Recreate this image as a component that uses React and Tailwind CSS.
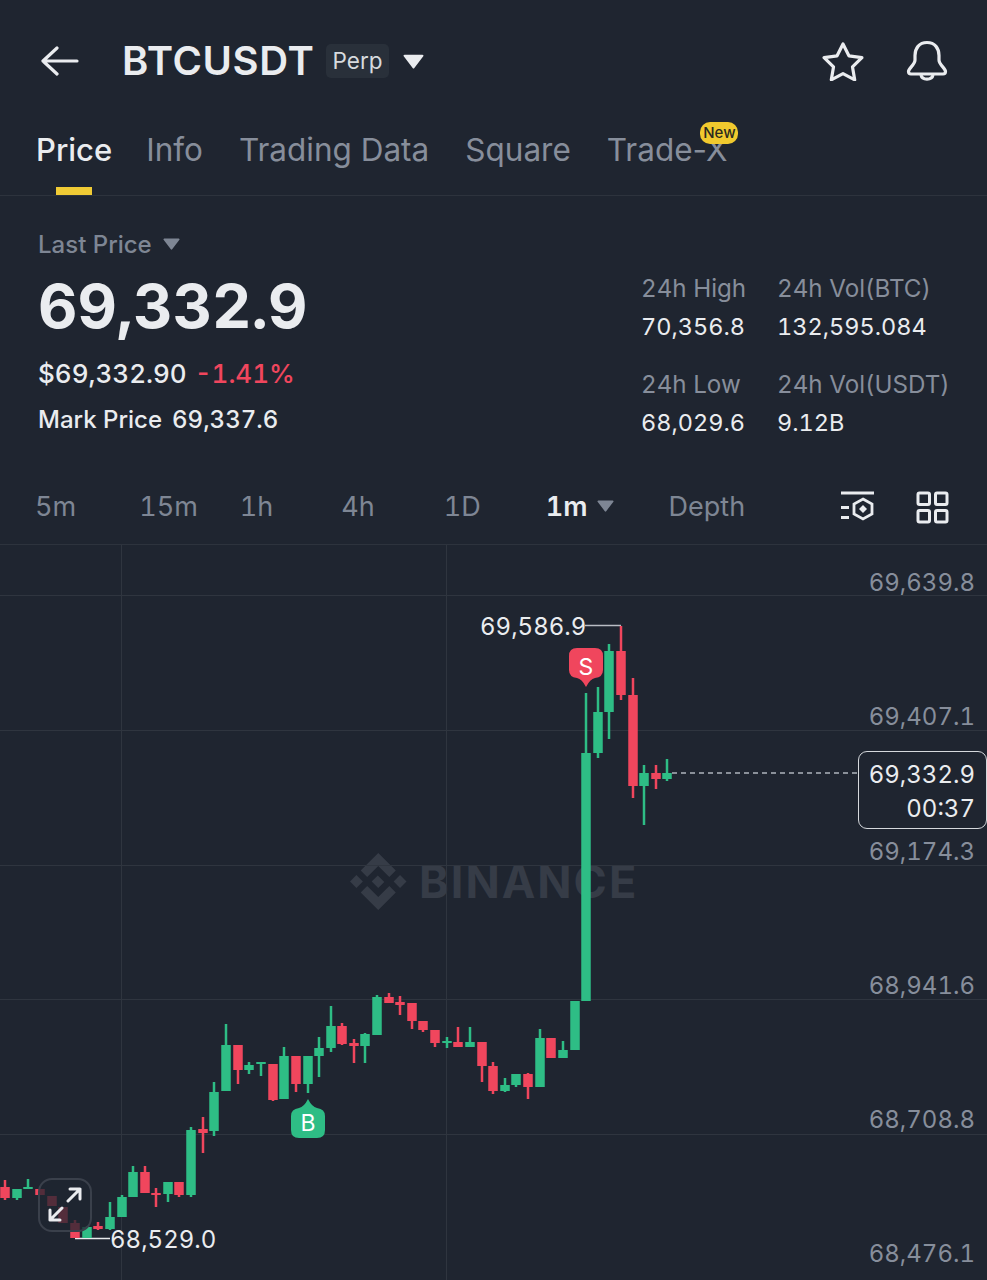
const GREEN = '#2ebd85';
const RED = '#f0465d';

// [x, bodyTop, bodyBottom, wickTop, wickBottom, up]
const candles = [
  [5, 1187, 1198, 1180, 1200, 0],
  [17, 1189, 1198, 1189, 1200, 1],
  [28, 1187, 1189, 1179, 1189, 1],
  [40, 1189, 1195, 1189, 1195, 0],
  [52, 1196, 1206, 1196, 1206, 0],
  [63, 1207, 1223, 1207, 1223, 0],
  [75, 1223, 1238, 1220, 1238, 0],
  [87, 1227, 1238, 1226, 1238, 1],
  [98, 1226, 1229, 1222, 1230, 0],
  [110, 1217, 1229, 1202, 1230, 1],
  [122, 1197, 1217, 1195, 1217, 1],
  [133, 1172, 1197, 1166, 1197, 1],
  [145, 1172, 1193, 1166, 1193, 0],
  [156, 1193, 1195, 1188, 1207, 0],
  [168, 1182, 1194, 1182, 1202, 1],
  [179, 1182, 1195, 1182, 1197, 0],
  [191, 1130, 1195, 1127, 1197, 1],
  [203, 1129, 1133, 1117, 1153, 0],
  [214, 1092, 1131, 1082, 1136, 1],
  [226, 1045, 1091, 1024, 1091, 1],
  [238, 1045, 1070, 1045, 1084, 0],
  [249, 1065, 1070, 1062, 1074, 1],
  [261, 1062, 1064, 1062, 1076, 1],
  [273, 1064, 1100, 1064, 1101, 0],
  [284, 1056, 1099, 1047, 1099, 1],
  [296, 1056, 1084, 1056, 1092, 0],
  [308, 1056, 1084, 1056, 1093, 1],
  [319, 1048, 1056, 1037, 1077, 1],
  [331, 1026, 1048, 1006, 1052, 1],
  [342, 1026, 1044, 1023, 1045, 0],
  [354, 1043, 1046, 1039, 1063, 0],
  [365, 1034, 1046, 1033, 1063, 1],
  [377, 997, 1035, 995, 1035, 1],
  [389, 997, 1003, 993, 1003, 0],
  [400, 1002, 1005, 996, 1015, 0],
  [412, 1003, 1021, 1003, 1029, 0],
  [423, 1021, 1030, 1021, 1032, 0],
  [435, 1030, 1043, 1030, 1047, 0],
  [447, 1041, 1043, 1037, 1048, 1],
  [458, 1042, 1047, 1027, 1047, 0],
  [470, 1042, 1047, 1027, 1047, 1],
  [482, 1042, 1066, 1042, 1082, 0],
  [493, 1066, 1091, 1062, 1094, 0],
  [505, 1085, 1091, 1078, 1092, 1],
  [516, 1074, 1085, 1074, 1087, 1],
  [528, 1074, 1087, 1073, 1099, 0],
  [540, 1038, 1087, 1029, 1087, 1],
  [551, 1038, 1058, 1038, 1058, 0],
  [563, 1050, 1058, 1041, 1058, 1],
  [575, 1001, 1050, 1001, 1050, 1],
  [586, 753, 1001, 693, 1001, 1],
  [598, 712, 753, 687, 758, 1],
  [609, 651, 712, 644, 739, 1],
  [621, 651, 695, 626, 700, 0],
  [633, 695, 786, 678, 798, 0],
  [644, 773, 786, 765, 825, 1],
  [656, 773, 779, 765, 789, 0],
  [667, 773, 779, 759, 781, 1],
];

const axis = ['69,639.8', '69,407.1', '69,174.3', '68,941.6', '68,708.8', '68,476.1'];

function Caret({ className }) {
  return (
    <svg className={className} viewBox="0 0 20 14" fill="currentColor">
      <path d="M1.5 0.5h17a1 1 0 0 1 .8 1.6l-8.5 11a1 1 0 0 1-1.6 0l-8.5-11A1 1 0 0 1 1.500 .5z" />
    </svg>
  );
}

function Chart() {
  return (
    <svg className="absolute inset-0 w-full h-full" viewBox="0 545 987 735">
      {[595, 730, 865, 999, 1134].map((y) => (
        <line key={y} x1="0" x2="987" y1={y + 0.5} y2={y + 0.5} stroke="#2f353f" />
      ))}
      {[121, 446].map((x) => (
        <line key={x} x1={x + 0.5} x2={x + 0.5} y1="545" y2="1280" stroke="#2f353f" />
      ))}
      <line x1="672" x2="858" y1="773" y2="773" stroke="#aeb4bc" strokeWidth="1.5" strokeDasharray="5 4" />
      <line x1="585" x2="621" y1="625.500" y2="625.500" stroke="#b9bdc4" strokeWidth="1.500" />
      <line x1="75" x2="110" y1="1238.500" y2="1238.500" stroke="#e8eaed" strokeWidth="1.500" />
      {candles.map(([x, top, bottom, wickTop, wickBottom, up]) => (
        <g key={x} fill={up ? GREEN : RED}>
          <rect x={x - 1.25} y={wickTop} width="2.5" height={wickBottom - wickTop} />
          <rect x={x - 4.75} y={top} width="9.5" height={bottom - top} />
        </g>
      ))}
    </svg>
  );
}

function Watermark() {
  return (
    <div className="absolute left-[350px] top-[308px] flex items-center gap-[12px] text-[#363c47]">
      <svg className="w-[57px] h-[57px]" viewBox="0 0 126.61 126.61" fill="currentColor">
        <path d="M38.171 53.203L62.759 28.616l24.6 24.6 14.306-14.307L62.759 0 23.864 38.896z" />
        <path d="M0 63.314L14.306 49.008 28.612 63.314 14.306 77.62z" />
        <path d="M38.171 73.424l24.588 24.587 24.6-24.6 14.313 14.299-.007.007-38.906 38.906-38.896-38.894-.02-.02z" />
        <path d="M96.905 63.321l14.307-14.306 14.306 14.306-14.306 14.306z" />
        <path d="M77.27 63.305h.006v.007L62.759 77.829 48.25 63.32l-.02-.02.02-.02 2.542-2.542 1.232-1.233 9.736-9.736 14.51 14.536z" />
      </svg>
      <span className="text-[45px] leading-none font-bold tracking-[2px]">BINANCE</span>
    </div>
  );
}

function Marker({ letter, className, d, fill, textClass }) {
  return (
    <div className={`absolute w-[34px] h-[39px] ${className}`}>
      <svg className="absolute inset-0" width="34" height="39" viewBox="0 0 34 39" fill={fill}>
        <path d={d} />
      </svg>
      <span className={`relative flex w-full h-full items-center justify-center text-[23px] text-white ${textClass}`}>{letter}</span>
    </div>
  );
}

export default function App() {
  return (
    <div className="w-[987px] h-[1280px] overflow-hidden flex flex-col bg-[#1f2530] text-[#eaecef] tabular-nums font-['Inter',sans-serif]">
      {/* top bar */}
      <div className="h-[122px] shrink-0 flex items-center pl-[41px] pr-[39px]">
        <svg className="w-[38px] h-[30px]" viewBox="0 0 38 30" fill="none" stroke="#eaecef" strokeWidth="3.2" strokeLinecap="round" strokeLinejoin="round">
          <path d="M36 15H2M16 2L2 15l14 13" />
        </svg>
        <span className="ml-[43px] w-[192px] text-[40px] leading-none font-semibold tracking-[0.6px]">BTCUSDT</span>
        <span className="ml-[12px] h-[34px] w-[63px] flex items-center justify-center rounded-[5px] bg-[#29303a] text-[22.500px] text-[#d7dade]">Perp</span>
        <Caret className="ml-[14px] w-[21px] h-[15px] text-[#eaecef]" />
        <svg className="ml-auto w-[42px] h-[40px]" viewBox="0 0 42 40" fill="none" stroke="#eaecef" strokeWidth="3.200" strokeLinejoin="round">
          <path d="M21 3l5.900 11.800 13 1.900-9.400 9.200 2.200 12.900L21 32.700 9.300 38.800l2.200-12.900-9.400-9.200 13-1.900z" />
        </svg>
        <svg className="ml-[42px] w-[42px] h-[42px]" viewBox="0 0 42 42" fill="none" stroke="#eaecef" strokeWidth="3.200" strokeLinejoin="round">
          <path d="M21 2.500C13 2.500 9 8.500 9 15.500V20C9 24.500 2.500 28.500 2.500 31.500Q2.500 34 5 34H37Q39.500 34 39.500 31.500C39.500 28.500 33 24.500 33 20V15.500C33 8.500 29 2.500 21 2.500Z" />
          <path d="M15 35C16 40.500 26 40.500 27 35" />
        </svg>
      </div>

      {/* tabs */}
      <div className="h-[74px] shrink-0 flex gap-[36px] pl-[36px] border-b border-[#2d333d] text-[31.500px] text-[#878e9b] proportional-nums">
        <div className="flex flex-col items-center mr-[-2px]">
          <span className="h-[56px] leading-[56px] text-[31px] text-[#eaecef] font-medium">Price</span>
          <span className="mt-[9px] h-[8px] w-[36px] bg-[#f0cb35]" />
        </div>
        <span className="h-[56px] leading-[56px]">Info</span>
        <span className="h-[56px] leading-[56px]">Trading Data</span>
        <span className="h-[56px] leading-[56px]">Square</span>
        <span className="relative h-[56px] leading-[56px]">
          Trade-X
          <span className="absolute right-[-11px] top-0 w-[38px] h-[22px] rounded-[10px] bg-[#f0c92e] text-[#2a2a20] text-[15px] leading-[22px] text-center font-medium">New</span>
        </span>
      </div>

      {/* stats */}
      <div className="h-[274px] shrink-0 flex">
        <div className="w-[641px] shrink-0 pl-[38px] pt-[34px]">
          <div className="h-[30px] flex items-center text-[24px] font-medium text-[#7e8694]">
            Last Price
            <Caret className="ml-[11px] w-[17px] h-[12px] mb-[2px] text-[#7e8694]" />
          </div>
          <div className="mt-[11px] h-[70px] leading-[70px] text-[61px] font-bold">69,332.9</div>
          <div className="mt-[16px] h-[34px] leading-[34px] text-[26px] font-medium">
            $69,332.90<span className="ml-[8px] text-[#f0465d]">-1.41%</span>
          </div>
          <div className="mt-[13px] h-[32px] leading-[32px] text-[24px] font-medium">
            Mark Price<span className="ml-[10px]">69,337.6</span>
          </div>
        </div>
        <div className="pt-[74px] grid grid-cols-[136px_auto] grid-rows-[38px_38px_38px_38px] text-[24.200px] leading-[38px]">
          <span className="text-[#878e9b]">24h High</span>
          <span className="text-[#878e9b]">24h Vol(BTC)</span>
          <span className="text-[23.500px]">70,356.8</span>
          <span className="text-[23.500px]">132,595.084</span>
          <span className="mt-[20px] text-[#878e9b]">24h Low</span>
          <span className="mt-[20px] text-[#878e9b]">24h Vol(USDT)</span>
          <span className="mt-[20px] text-[23.500px]">68,029.6</span>
          <span className="mt-[20px] text-[23.500px]">9.12B</span>
        </div>
      </div>

      {/* intervals */}
      <div className="h-[75px] shrink-0 flex items-center border-b border-[#2d333d] text-[27px] text-[#7e8694]">
        <span className="ml-[35px]">5m</span>
        <span className="ml-[63px]">15m</span>
        <span className="ml-[42px]">1h</span>
        <span className="ml-[68px]">4h</span>
        <span className="ml-[69px]">1D</span>
        <span className="ml-[65px] font-semibold text-[#eaecef]">1m</span>
        <Caret className="ml-[9px] w-[17px] h-[12px] mb-[3px] text-[#7e8694]" />
        <span className="ml-[55px]">Depth</span>
        <svg className="ml-auto w-[36px] h-[34px]" viewBox="0 0 36 34" fill="none" stroke="#eaecef" strokeWidth="3">
          <path d="M1 3h33M1 17.500h8M1 27.500h8" />
          <path strokeWidth="2.800" d="M23 9l9 5v10l-9 5-9-5V14z" />
          <path fill="#eaecef" stroke="none" d="M23 15l4 4-4 4-4-4z" />
        </svg>
        <svg className="ml-[40px] mr-[38px] w-[33px] h-[33px]" viewBox="0 0 33 33" fill="none" stroke="#eaecef" strokeWidth="3">
          <rect x="2" y="2" width="11.500" height="11.500" rx="1.500" />
          <rect x="19.500" y="2" width="11.500" height="11.500" rx="1.500" />
          <rect x="2" y="19.500" width="11.500" height="11.500" rx="1.500" />
          <rect x="19.500" y="19.500" width="11.500" height="11.500" rx="1.500" />
        </svg>
      </div>

      {/* chart */}
      <div className="relative flex-1">
        <Watermark />
        <Chart />

        <div className="absolute right-[12px] top-[19px] flex flex-col items-end text-[24px] leading-[38px] text-[#878e9b]">
          {axis.map((label) => (
            <span key={label} className="h-[134.300px]">{label}</span>
          ))}
        </div>

        <div className="absolute left-[858px] top-[206px] w-[129px] h-[78px] flex flex-col items-end justify-center pr-[11px] pt-[3px] rounded-[9px] border-[1.500px] border-[#d5d8dc] bg-[#1f2530] text-[24px] leading-[34px]">
          <span>69,332.9</span>
          <span>00:37</span>
        </div>

        <span className="absolute left-[480px] top-[66px] text-[24px] leading-[32px]">69,586.9</span>
        <span className="absolute left-[110px] top-[679px] text-[24px] leading-[32px]">68,529.0</span>

        <Marker
          letter="S"
          fill="#f0465d"
          className="left-[569px] top-[103px]"
          textClass="pb-0"
          d="M8 0H26Q34 0 34 8V22Q34 29 26 30Q21 31 17 39Q13 31 8 30Q0 29 0 22V8Q0 0 8 0Z"
        />
        <Marker
          letter="B"
          fill="#2ebd85"
          className="left-[291px] top-[554px]"
          textClass="pt-[9px]"
          d="M8 39H26Q34 39 34 31V17Q34 10 26 9Q21 8 17 0Q13 8 8 9Q0 10 0 17V31Q0 39 8 39Z"
        />

        <div className="absolute left-[38px] top-[633px] w-[54px] h-[54px] flex items-center justify-center rounded-[14px] border-2 border-[#3a404b] bg-[#1f2530]/75">
          <svg className="w-[36px] h-[36px]" viewBox="0 0 36 36" fill="none" stroke="#eaecef" strokeWidth="3" strokeLinecap="round" strokeLinejoin="round">
            <path d="M21 14L33 2M23 2h10v10M15 21L3 33M3 23v10h10" />
          </svg>
        </div>
      </div>
    </div>
  );
}
